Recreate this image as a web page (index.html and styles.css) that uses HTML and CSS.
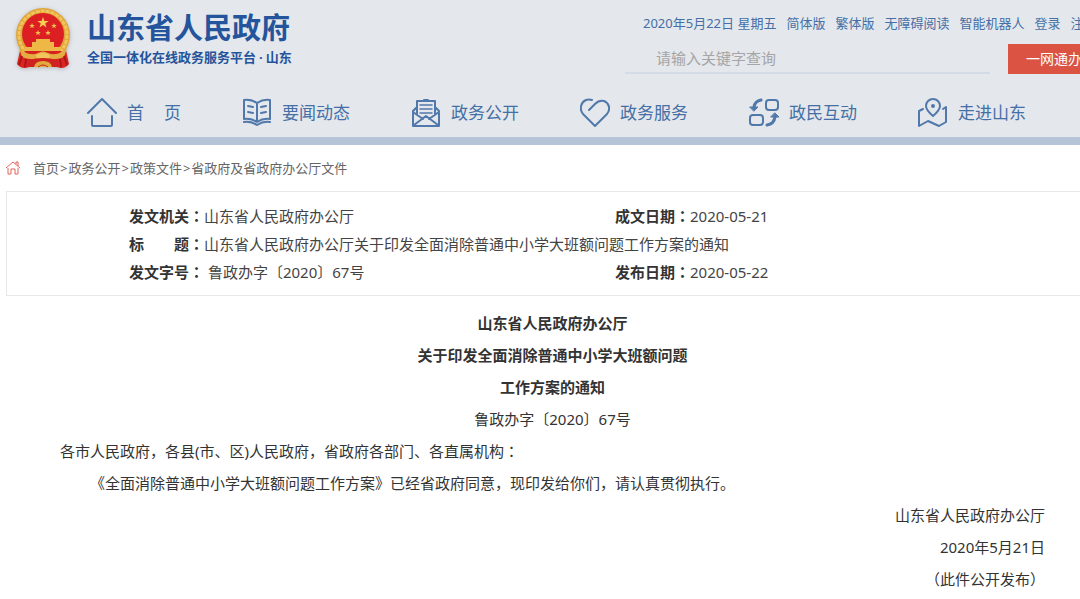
FILE: index.html
```html
<!DOCTYPE html>
<html lang="zh-CN">
<head>
<meta charset="utf-8">
<meta name="viewport" content="width=device-width, initial-scale=1">
<title>山东省人民政府</title>
<link rel="stylesheet" href="styles.css">
</head>
<body>
<header class="header">
  <div class="masthead">
    <a class="brand" href="#">
      <svg class="emblem" viewBox="0 0 60 66" aria-hidden="true">
        <path d="M8 40 L4 58 Q9 64 16 61 H44 Q51 64 56 58 L52 40Z" fill="#d9241f"/>
        <circle cx="30" cy="29" r="27" fill="#dfa53a"/>
        <circle cx="30" cy="29" r="24" fill="none" stroke="#efc55c" stroke-width="3" stroke-dasharray="4 1"/>
        <circle cx="30" cy="28" r="21" fill="#dc1f22"/>
        <path d="M30 11l1.400 4h4.200l-3.400 2.500 1.300 4-3.500-2.500-3.500 2.500 1.300-4-3.400-2.500h4.200z" fill="#f7cf55"/>
        <g fill="#f2c04e"><path id="star" d="M19 17l.8 2h2l-1.600 1.300.6 2-1.800-1.200-1.800 1.200.6-2-1.600-1.300h2z"/><use href="#star" x="22"/><use href="#star" x="6" y="7"/><use href="#star" x="16" y="7"/></g>
        <path d="M23 33h14v3h4v5h7v4H12v-4h7v-5h4z" fill="#eeb846"/>
        <path d="M11 45h38l-4 5H15z" fill="#d6211f"/>
        <path d="M6 42l5 4q8 4 14 1 5-3 10 0 6 3 14-1l5-4-3 9q-9 4-16 0-5 3-10 0-7 4-16 0z" fill="#e4ac43"/>
        <ellipse cx="30" cy="50" rx="7" ry="3" fill="#f1c45c"/>
        <path d="M15 54q15-4 30 0v7H15z" fill="#cf211e"/>
        <path d="M9 50l-3 9M13 53l-1 8M47 53l1 8M51 50l3 9" stroke="#a91519" stroke-width="2"/>
        <path d="M21 61q1-6 9-6t9 6z" fill="#e2a93d"/>
        <path d="M25 61q5-4 10 0" fill="none" stroke="#c52a1d" stroke-width="1"/>
      </svg>
      <span class="brand-text">
        <strong class="brand-name">山东省人民政府</strong>
        <span class="brand-sub">全国一体化在线政务服务平台<span class="dot">·</span>山东</span>
      </span>
    </a>
    <div class="tools">
      <div class="top-links">
        <span>2020年5月22日 星期五</span>
        <a href="#">简体版</a><a href="#">繁体版</a><a href="#">无障碍阅读</a><a href="#">智能机器人</a><a href="#">登录</a><a href="#">注册</a>
      </div>
      <form class="search">
        <input class="search-box" type="text" placeholder="请输入关键字查询" aria-label="请输入关键字查询">
        <button class="search-button" type="button">一网通办</button>
      </form>
    </div>
  </div>
  <nav class="nav">
    <a href="#">
      <svg class="icon" viewBox="0 0 30 30"><path d="M1 15L15 1l14 14M5 18v9q0 1 1 1h18q1 0 1-1v-9"/></svg>
      <span class="home-label"><span>首</span><span>页</span></span>
    </a>
    <a href="#">
      <svg class="icon" viewBox="0 0 30 30"><path d="M15 5Q9 1 2 2v19q7-1 13 3 6-4 13-3V2q-7-1-13 3v19M2 24q7-1 13 3 6-4 13-3M6 8l5 1M6 14l5 1M19 9l5-1M19 15l5-1"/></svg>
      要闻动态
    </a>
    <a href="#">
      <svg class="icon" viewBox="0 0 30 30"><path d="M6 17V3h18v14M6 9l-4 4v15h26V13l-4-4M2 14l10 7M28 14l-10 7M3 27l12-9 12 9M13 2h4"/><path d="M9 7h12M9 11h12M9 15h12" stroke-width="1.500"/></svg>
      政务公开
    </a>
    <a href="#">
      <svg class="icon" viewBox="0 0 30 30"><path d="M9 12l6-6q4-4 9-3c5 2 7 8 3 13L15 28 3 16C-1 11 1 4 6 2q3-1 6 0"/></svg>
      政务服务
    </a>
    <a href="#">
      <svg class="icon" viewBox="0 0 30 30"><rect x="17" y="2" width="12" height="10" rx="3"/><rect x="1" y="17" width="13" height="10" rx="3"/><path d="M12 2Q6 3 5 9M18 27q7-1 8-8" stroke-width="3"/><path d="M1 9h8l-4 4zM22 19h8l-4-4z" fill="#5078aa" stroke-width="1"/></svg>
      政民互动
    </a>
    <a href="#">
      <svg class="icon" viewBox="0 0 30 30"><path d="M15 18Q8 12 8 8a7 7 0 0 1 14 0q0 4-7 10zM5 11l-4 2v15l9-5 11 5 7-4V9l-3 2"/><circle cx="15" cy="8" r="1"/></svg>
      走进山东
    </a>
  </nav>
</header>
<main>
  <nav class="crumbs">
    <svg class="crumb-icon" viewBox="0 0 14 14" aria-hidden="true"><path d="M0 7l7-6 7 6M10 3V1h2v4M2 7v6h3V8h4v5h3V7"/></svg>
    <span><a href="#">首页</a><span class="sep">&gt;</span><a href="#">政务公开</a><span class="sep">&gt;</span><a href="#">政策文件</a><span class="sep">&gt;</span><a href="#">省政府及省政府办公厅文件</a></span>
  </nav>
  <dl class="info">
    <div><dt>发文机关<span class="mark" lang="zh-TW">：</span></dt><dd>山东省人民政府办公厅</dd></div>
    <div><dt>成文日期<span class="mark" lang="zh-TW">：</span></dt><dd>2020-05-21</dd></div>
    <div class="wide"><dt>标&emsp;&emsp;题<span class="mark" lang="zh-TW">：</span></dt><dd>山东省人民政府办公厅关于印发全面消除普通中小学大班额问题工作方案的通知</dd></div>
    <div><dt>发文字号<span class="mark" lang="zh-TW">：</span></dt><dd>&nbsp;鲁政办字〔2020〕67号</dd></div>
    <div><dt>发布日期<span class="mark" lang="zh-TW">：</span></dt><dd>2020-05-22</dd></div>
  </dl>
  <article class="doc">
    <h1>山东省人民政府办公厅<br>关于印发全面消除普通中小学大班额问题<br>工作方案的通知</h1>
    <p class="number">鲁政办字〔2020〕67号</p>
    <p>各市人民政府，各县(市、区)人民政府，省政府各部门、各直属机构<span class="mark" lang="zh-TW">：</span></p>
    <p class="indent">《全面消除普通中小学大班额问题工作方案》已经省政府同意，现印发给你们，请认真贯彻执行。</p>
    <p class="sign">山东省人民政府办公厅</p>
    <p class="sign">2020年5月21日</p>
    <p class="sign">（此件公开发布）</p>
  </article>
</main>
</body>
</html>
```
FILE: styles.css
```css
* { box-sizing: border-box; }
body {
  margin: 0;
  background: #fff;
  color: #444;
  font: 15px/32px "Noto Sans", "Noto Sans CJK SC", sans-serif;
  overflow-x: hidden;
}
a { color: inherit; text-decoration: none; }
p, h1, dl, dd { margin: 0; }
.mark { font-family: "Noto Sans CJK TC", sans-serif; }

.header {
  background: #e4e7ec;
  border-bottom: 8px solid #b5c5d7;
  color: #4470a6;
  overflow: hidden;
}
.masthead { display: flex; justify-content: space-between; height: 88px; }
.brand { display: flex; gap: 14px; padding: 6px 0 0 13px; color: #24549b; }
.emblem { width: 60px; height: 66px; filter: drop-shadow(0 1px 2px #8888); }
.brand-text { display: flex; flex-direction: column; padding-top: 4px; }
.brand-name { font-size: 29px; line-height: 36px; }
.brand-sub { font-size: 13px; line-height: 22px; font-weight: 700; }
.dot { padding: 0 3px; }
.tools { width: 455px; padding-top: 13px; }
.top-links {
  display: flex;
  gap: 10px;
  padding-left: 18px;
  font-size: 13px;
  line-height: 20px;
  white-space: nowrap;
}
.search { display: flex; gap: 18px; padding-top: 11px; }
.search-box {
  flex: 0 0 365px;
  height: 30px;
  padding: 0 31px;
  border: 0;
  border-bottom: 2px solid #d3dbe7;
  background: transparent;
  font: inherit;
}
.search-box::placeholder { color: #a5a5a5; opacity: 1; }
.search-button {
  flex: 0 0 92px;
  height: 30px;
  padding: 0;
  border: 0;
  background: #da5343;
  color: #fff;
  font: 14px/30px "Noto Sans", "Noto Sans CJK SC", sans-serif;
}
.nav {
  display: grid;
  grid-template-columns: 155px repeat(5, 169px);
  padding-left: 87px;
  height: 49px;
  font-size: 17px;
}
.nav a { display: flex; align-items: center; gap: 10px; white-space: nowrap; }
.home-label { display: flex; gap: 20px; }
.icon {
  width: 30px;
  height: 30px;
  fill: none;
  stroke: #5078aa;
  stroke-width: 2;
  stroke-linejoin: round;
  stroke-linecap: round;
}

.crumbs {
  display: flex;
  align-items: center;
  gap: 13px;
  padding: 7px 6px;
  color: #666;
  font-size: 13px;
}
.sep { padding: 0 1px; }
.crumb-icon { width: 14px; height: 14px; fill: none; stroke: #e2655a; stroke-width: 1; }
.info {
  display: grid;
  grid-template-columns: 486px 1fr;
  margin-left: 6px;
  padding: 10px 0 9px 122px;
  border: 1px solid #e8e8e8;
  border-right: 0;
  line-height: 28px;
}
.info div { display: flex; }
.info .wide { grid-column: 1 / -1; }
.info dt { font-weight: 700; color: #333; }
.doc { padding: 11px 35px 5px 60px; color: #333; }
.doc h1 { font-size: 15px; line-height: 32px; }
.doc h1, .number { text-align: center; }
.indent { text-indent: 2em; }
.sign { text-align: right; }
```
